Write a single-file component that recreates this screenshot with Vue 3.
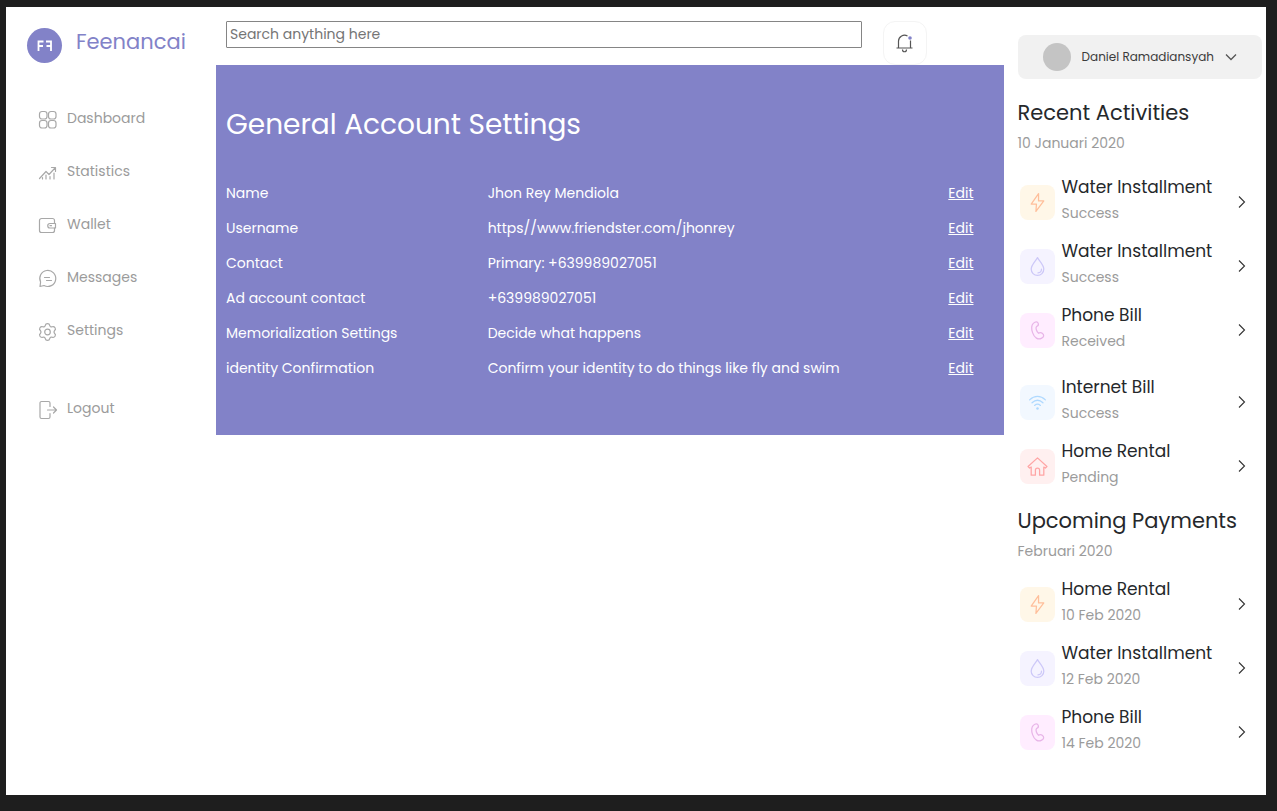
<script setup>
const account = [
  { label: 'Name', value: 'Jhon Rey Mendiola' },
  { label: 'Username', value: 'https//www.friendster.com/jhonrey' },
  { label: 'Contact', value: 'Primary: +639989027051' },
  { label: 'Ad account contact', value: '+639989027051' },
  { label: 'Memorialization Settings', value: 'Decide what happens' },
  { label: 'identity Confirmation', value: 'Confirm your identity to do things like fly and swim' },
]

const nav = ['Dashboard', 'Statistics', 'Wallet', 'Messages', 'Settings', 'Logout']

const sections = [
  {
    title: 'Recent Activities',
    date: '10 Januari 2020',
    kind: 'recent',
    items: [
      { name: 'Water Installment', note: 'Success', icon: 'bolt' },
      { name: 'Water Installment', note: 'Success', icon: 'drop' },
      { name: 'Phone Bill', note: 'Received', icon: 'phone' },
      { name: 'Internet Bill', note: 'Success', icon: 'wifi' },
      { name: 'Home Rental', note: 'Pending', icon: 'home' },
    ],
  },
  {
    title: 'Upcoming Payments',
    date: 'Februari 2020',
    kind: 'upcoming',
    items: [
      { name: 'Home Rental', note: '10 Feb 2020', icon: 'bolt' },
      { name: 'Water Installment', note: '12 Feb 2020', icon: 'drop' },
      { name: 'Phone Bill', note: '14 Feb 2020', icon: 'phone' },
    ],
  },
]
</script>

<template>
  <div class="page">
    <div class="sheet">
      <aside class="sidebar">
        <a class="brand" href="#">
          <span class="logo">
            <svg width="35" height="35" viewBox="0 0 35 35" aria-hidden="true">
              <g fill="none" stroke="#fff" stroke-width="1.800">
                <path d="M11.500 23V13.500H16.500M11.500 18H16" />
                <path d="M24 23V13.500H19M24 18H19.500" />
              </g>
            </svg>
          </span>
          <span class="brand-name">Feenancai</span>
        </a>
        <nav class="nav">
          <a v-for="item in nav" :key="item" href="#" class="nav-link" :class="{ last: item === 'Logout' }">
            <svg class="nav-icon" width="20" height="20" viewBox="0 0 20 20" aria-hidden="true">
              <g v-if="item === 'Dashboard'">
                <rect x="1.500" y="1.500" width="7.500" height="7.500" rx="2.500" />
                <rect x="10.500" y="1.500" width="7.500" height="7.500" rx="2.500" />
                <rect x="1.500" y="10.500" width="7.500" height="7.500" rx="2.500" />
                <rect x="10.500" y="10.500" width="7.500" height="7.500" rx="2.500" />
              </g>
              <g v-else-if="item === 'Statistics'">
                <path d="M1.500 15.500L8 8.500l3 3L17 5M13.500 4.500H17.500V8.500" />
                <path d="M4.500 14.500V16M8 12V16M12 13.500V16M16 10V16" />
              </g>
              <g v-else-if="item === 'Wallet'">
                <path d="M16.500 7V4.500a2 2 0 0 0-2-2H3.500a2 2 0 0 0-2 2v10a2 2 0 0 0 2 2h11a2 2 0 0 0 2-2V12" />
                <path d="M17.500 7.500H12a2 2 0 0 0 0 4.500h5.500zM12 9.700h1.500" />
              </g>
              <g v-else-if="item === 'Messages'">
                <path d="M2 17.500l.6-4.500A8 8 0 1 1 6 16.500z" />
                <path d="M6.500 8.500h5M8.500 11.500h5" />
              </g>
              <g v-else-if="item === 'Settings'">
                <circle cx="9.500" cy="10" r="2.800" />
                <path d="M7.300 3.300C7.700 1 11.300 1 11.700 3.300C12 4.700 13 5.200 14.200 4.800C16.600 4 18.500 7 16.700 8.500C15.800 9.400 15.800 10.600 16.700 11.500C18.500 13 16.600 16 14.200 15.200C13 14.800 12 15.300 11.700 16.700C11.300 19 7.700 19 7.300 16.700C7 15.300 6 14.800 4.800 15.200C2.400 16 .5 13 2.300 11.500C3.200 10.600 3.200 9.400 2.300 8.500C.5 7 2.400 4 4.800 4.800C6 5.200 7 4.700 7.300 3.300Z" />
              </g>
              <g v-else>
                <path d="M12 6.500V3a1.500 1.500 0 0 0-1.500-1.500H3.500A1.500 1.500 0 0 0 2 3v14A1.500 1.500 0 0 0 3.500 18.500h7A1.500 1.500 0 0 0 12 17v-3.500" />
                <path d="M9.500 10H18.500M15.500 7l3 3-3 3" />
              </g>
            </svg>
            {{ item }}
          </a>
        </nav>
      </aside>

      <main class="main">
        <div class="topbar">
          <input class="search" type="text" placeholder="Search anything here" aria-label="Search" />
          <button class="bell" type="button" aria-label="Notifications">
            <svg width="20" height="22" viewBox="0 0 20 22" fill="none" stroke="#555" stroke-width="1.200" aria-hidden="true">
              <path d="M1.500 16h16M3.500 16V9a6 6 0 0 1 9-5M15.500 8.500V16M7.500 17.500c0 3 4 3 4 0" />
              <circle cx="15" cy="6" r="1.800" fill="#8282c8" stroke="none" />
            </svg>
          </button>
        </div>
        <section class="panel">
          <h1>General Account Settings</h1>
          <table>
            <tbody>
              <tr v-for="row in account" :key="row.label">
                <th scope="row">{{ row.label }}</th>
                <td>{{ row.value }}</td>
                <td class="action"><a href="#" :aria-label="'Edit ' + row.label">Edit</a></td>
              </tr>
            </tbody>
          </table>
        </section>
      </main>

      <aside class="feed">
        <button class="profile" type="button">
          <span class="avatar"></span>
          <span>Daniel Ramadiansyah</span>
          <svg width="12" height="8" viewBox="0 0 12 8" fill="none" stroke="#555" stroke-width="1.300" aria-hidden="true">
            <path d="M1 1.500l5 5 5-5" />
          </svg>
        </button>
        <section v-for="section in sections" :key="section.title" :class="section.kind">
          <h2>{{ section.title }}</h2>
          <p class="date">{{ section.date }}</p>
          <ul>
            <li v-for="(item, i) in section.items" :key="i" :class="item.icon">
              <span class="tile">
                <svg width="21" height="21" viewBox="0 0 20 20" aria-hidden="true">
                  <path v-if="item.icon === 'bolt'" d="M11 1.500L4 11.500H9L8.500 18.500L16 8.500H11Z" />
                  <g v-else-if="item.icon === 'drop'">
                    <path d="M10 1.500C8 5 4 8.500 4 12.500a6 6 0 0 0 12 0C16 8.500 12 5 10 1.500z" />
                    <path d="M13.800 12.500a3.600 3.600 0 0 1-3.300 3.600" />
                  </g>
                  <path v-else-if="item.icon === 'phone'" d="M6 3.200C8 1.500 10 1.300 10.700 3.200C11.200 4.700 10.700 5.600 9 6.200C8 7.500 9 11 11 12.600C12.300 11.700 13.300 11.700 14.500 12.700C16.500 14.300 16.300 16 14 17.300C10.500 19.300 7 17 5.300 12C4 8 4.200 5 6 3.200Z" />
                  <g v-else-if="item.icon === 'wifi'">
                    <path d="M2.500 7.500C7 3 13 3 17.500 7.500M4.800 10.300C8 7.300 12 7.300 15.200 10.300M7.200 12.800C9 11.300 11 11.300 12.800 12.800" />
                    <circle class="dot" cx="10" cy="15.800" r="1.200" />
                  </g>
                  <path v-else d="M10 1.800L1 10L2.500 11.500L4 10.500V18.300H8V13.500A2 2 0 0 1 12 13.500V18.300H16V10.500L17.500 11.500L19 10Z" />
                </svg>
              </span>
              <div class="text">
                <h3>{{ item.name }}</h3>
                <p>{{ item.note }}</p>
              </div>
              <button class="open" type="button" :aria-label="'Open ' + item.name">
                <svg width="8" height="12" viewBox="0 0 8 12" fill="none" stroke="#333" stroke-width="1.100" aria-hidden="true">
                  <path d="M1 .5L6.500 6L1 11.500" />
                </svg>
              </button>
            </li>
          </ul>
        </section>
      </aside>
    </div>
  </div>
</template>

<style>
body {
  background: #1e1e1e;
}
</style>

<style scoped>
* {
  box-sizing: border-box;
}

.page {
  min-height: 100vh;
  padding: 7px 11px 16px 6px;
  background: #1e1e1e;
  font-family: Poppins, Inter, "Open Sans", sans-serif;
  font-size: 14px;
  color: #25282b;
}

.sheet {
  display: grid;
  grid-template-columns: 4fr 15fr 5fr;
  min-height: calc(100vh - 23px);
  background: #fff;
}

h1,
h2,
h3,
p,
ul {
  margin: 0;
  padding: 0;
  font-weight: 400;
}

button {
  font: inherit;
  cursor: pointer;
}

.brand {
  display: flex;
  align-items: center;
  gap: 14px;
  padding: 21px 0 0 21px;
  color: #8282c8;
  text-decoration: none;
}

.logo {
  width: 35px;
  height: 35px;
  border-radius: 50%;
  background: #8282c8;
}

.brand-name {
  padding-bottom: 8px;
  font-size: 21px;
  line-height: 26px;
}

.nav {
  display: flex;
  flex-direction: column;
  padding: 29px 0 0 32px;
}

.nav-link {
  display: flex;
  align-items: center;
  gap: 9px;
  height: 53px;
  color: #9b9b9b;
  text-decoration: none;
}

.nav-link.last {
  margin-top: 25px;
}

.nav-icon {
  margin-top: 3px;
  fill: none;
  stroke: #a8a8a8;
  stroke-width: 1.200;
  stroke-linecap: round;
  stroke-linejoin: round;
}

.main {
  min-width: 0;
}

.topbar {
  display: flex;
  align-items: flex-start;
  gap: 21px;
  padding: 14px 77px 0 10px;
}

.search {
  flex: 1;
  min-width: 0;
  height: 27px;
  padding: 1px 3px;
  border: 1px solid #858585;
  border-radius: 1px;
  font: inherit;
  background: #fff;
}

.search::placeholder {
  color: #757575;
}

.bell {
  display: grid;
  place-items: center;
  width: 44px;
  height: 44px;
  padding: 0;
  border: 1px solid #f4f4f4;
  border-radius: 12px;
  background: #fff;
}

.panel {
  padding: 38px 30px 49px 10px;
  background: #8282c8;
  color: #fff;
}

h1 {
  margin-bottom: 29px;
  font-size: 28px;
  line-height: 44px;
}

table {
  width: 100%;
  border-collapse: collapse;
}

th,
td {
  height: 35px;
  padding: 0;
  font-weight: 400;
  text-align: left;
}

th {
  width: 35%;
}

td.action {
  text-align: right;
}

td a {
  color: #fff;
}

.feed {
  padding: 28px 4px 31px 14px;
}

.profile {
  display: flex;
  align-items: center;
  justify-content: center;
  gap: 11px;
  width: 100%;
  height: 44px;
  padding: 0;
  border: 0;
  border-radius: 8px;
  background: #f1f1f1;
  color: #3c3c3c;
  font-size: 12px;
}

.avatar {
  width: 28px;
  height: 28px;
  border-radius: 50%;
  background: #c4c4c4;
}

.recent {
  padding-top: 18px;
}

.upcoming {
  padding-top: 7px;
}

h2 {
  font-size: 21px;
  line-height: 32px;
  white-space: nowrap;
}

.date {
  padding: 2px 0 15px;
  color: #9b9b9b;
  line-height: 24px;
}

.upcoming .date {
  padding-bottom: 9px;
}

ul {
  list-style: none;
}

li {
  display: flex;
  align-items: center;
  height: 64px;
  padding: 0 16px 0 2px;
}

li.wifi {
  margin-top: 8px;
}

.tile {
  display: grid;
  place-items: center;
  width: 35px;
  height: 35px;
  border-radius: 8px;
}

.tile svg {
  fill: none;
  stroke: currentColor;
  stroke-width: 1.200;
  stroke-linejoin: round;
  stroke-linecap: round;
}

.tile .dot {
  fill: currentColor;
  stroke: none;
}

.bolt .tile {
  background: #fff7e8;
  color: #ffbf9b;
}

.drop .tile {
  background: #f5f3ff;
  color: #cdc8f8;
}

.phone .tile {
  background: #ffedff;
  color: #e8b5e8;
}

.wifi .tile {
  background: #f2f8ff;
  color: #afd9ff;
}

.home .tile {
  background: #fff0f0;
  color: #ffa5a5;
}

.text {
  flex: 1;
  padding: 0 0 4px 7px;
  line-height: 26px;
  white-space: nowrap;
}

h3 {
  font-size: 17px;
}

.text p {
  color: #9b9b9b;
}

.open {
  display: grid;
  padding: 0;
  border: 0;
  background: none;
}
</style>
